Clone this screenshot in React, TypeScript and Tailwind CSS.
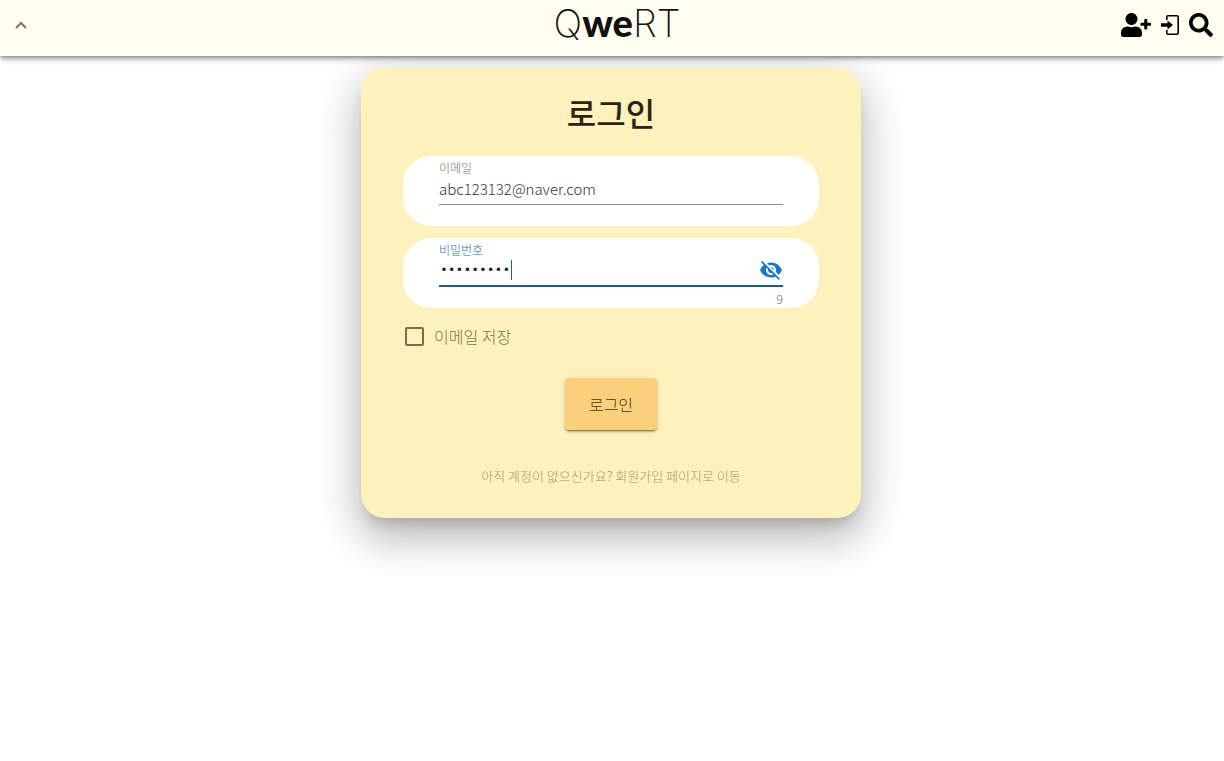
import { useState } from "react";
import { FaSearch, FaUserPlus } from "react-icons/fa";
import { MdVisibility, MdVisibilityOff } from "react-icons/md";

function LoginIcon() {
  return (
    <svg viewBox="0 0 20 24" className="h-6 w-5" fill="currentColor" aria-hidden="true">
      <path d="M8 2H17A2 2 0 0 1 19 4V20A2 2 0 0 1 17 22H8A2 2 0 0 1 6 20V17H7.600V20.400H17.400V3.600H7.600V7H6V4A2 2 0 0 1 8 2Z" />
      <path d="M1 10.200H7.500V7.500L13 12L7.500 16.500V13.800H1Z" />
    </svg>
  );
}

function Header() {
  return (
    <header className="relative z-10 grid h-14 grid-cols-[1fr_auto_1fr] items-center bg-[#fffff0] shadow-[0_2px_4px_-1px_rgba(0,0,0,0.4),0_4px_5px_0_rgba(0,0,0,0.14),0_1px_10px_0_rgba(0,0,0,0.12)]">
      <button type="button" aria-label="메뉴" className="mb-2 ml-3 w-fit text-[#77776c]">
        <svg viewBox="0 0 18 18" className="h-[18px] w-[18px]" fill="none" stroke="currentColor" strokeWidth="2" aria-hidden="true">
          <path d="M4 12L9 7L14 12" />
        </svg>
      </button>
      <a href="#" className="mb-3 ml-2.5 flex items-baseline leading-[44px] text-[#111]">
        <span className="font-['Inter',sans-serif] text-[38px] font-extralight">Q</span>
        <span className="font-['Lato',sans-serif] text-[38px] font-black">we</span>
        <span className="font-['Inter',sans-serif] text-[38px] font-extralight">RT</span>
      </a>
      <nav className="mr-[11px] mb-2 flex items-center justify-end gap-[9px] text-black">
        <a href="#" aria-label="회원가입">
          <FaUserPlus className="h-6 w-[30px]" />
        </a>
        <a href="#" aria-label="로그인">
          <LoginIcon />
        </a>
        <a href="#" aria-label="검색">
          <FaSearch className="h-6 w-6" />
        </a>
      </nav>
    </header>
  );
}

export default function App() {
  const [email, setEmail] = useState("abc123132@naver.com");
  const [password, setPassword] = useState("qwert1234");
  const [visible, setVisible] = useState(false);

  return (
    <div className="min-h-screen bg-white font-['Noto_Sans_CJK_KR',sans-serif]">
      <Header />
      <main className="px-4 pt-3 pr-[18px]">
        <form
          onSubmit={(e) => e.preventDefault()}
          className="mx-auto flex max-w-[500px] flex-col rounded-3xl bg-[#fdf2bb] px-[42px] pt-5 pb-8 shadow-[0_11px_15px_-7px_rgba(0,0,0,0.2),0_24px_38px_3px_rgba(0,0,0,0.14),0_9px_46px_8px_rgba(0,0,0,0.12)]"
        >
          <h1 className="mb-5 text-center text-[32px] leading-[48px] font-medium text-[#2b2415]">로그인</h1>

          <div className="mb-3 h-[70px] rounded-[28px] bg-white px-9 pt-1">
            <label htmlFor="email" className="block text-xs leading-4 font-light text-[#777]">
              이메일
            </label>
            <div className="border-b border-[#8a8a8a] pb-1">
              <input
                id="email"
                type="email"
                value={email}
                onChange={(e) => setEmail(e.target.value)}
                className="block h-6 w-full text-[15px] font-light text-[#333] outline-none"
              />
            </div>
          </div>

          <div className="h-[70px] rounded-[28px] bg-white px-9 pt-1">
            <label htmlFor="password" className="block text-xs leading-4 font-light text-[#1976d2]">
              비밀번호
            </label>
            <div className="relative flex items-center border-b-2 border-[#245a8d] pb-[3px]">
              <input
                id="password"
                type={visible ? "text" : "password"}
                value={password}
                onChange={(e) => setPassword(e.target.value)}
                className="block h-6 min-w-0 flex-1 pl-px font-['Liberation_Mono',monospace] text-[13px] text-[#222] outline-none"
              />
              <span className="absolute top-0.5 left-[72px] h-5 w-px bg-[#1b5fa5]" />
              <button type="button" aria-label="비밀번호 표시" onClick={() => setVisible(!visible)} className="text-[#1976d2]">
                {visible ? <MdVisibility className="h-6 w-6" /> : <MdVisibilityOff className="h-6 w-6" />}
              </button>
            </div>
            <p className="mt-1 text-right text-xs leading-4 font-light text-[#666]">{password.length}</p>
          </div>

          <label className="mt-4 ml-0.5 flex h-6 items-center gap-2.5 text-base font-light text-[#7a7455]">
            <input type="checkbox" className="h-[19px] w-[19px] appearance-none rounded-xs border-2 border-[#7b6c50] checked:bg-[#7b6c50]" />
            이메일 저장
          </label>

          <button
            type="submit"
            className="mt-[30px] h-[52px] self-center rounded bg-[#fbd07c] px-6 text-base font-light text-[#4a3b18] shadow-[0_3px_1px_-2px_rgba(0,0,0,0.3),0_2px_2px_0_rgba(0,0,0,0.2),0_1px_5px_0_rgba(0,0,0,0.12)]"
          >
            로그인
          </button>

          <a href="#" className="mt-9 self-center text-[13px] leading-5 font-light text-[#a39a6c]">
            아직 계정이 없으신가요? 회원가입 페이지로 이동
          </a>
        </form>
      </main>
    </div>
  );
}
